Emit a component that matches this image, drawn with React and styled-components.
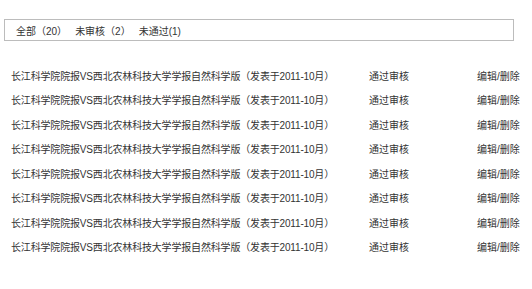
import React from 'react'
import styled, { createGlobalStyle } from 'styled-components'

const GlobalStyle = createGlobalStyle`
  body {
    margin: 0;
    background: #fff;
    font-family: "Liberation Sans", "Noto Sans CJK SC", sans-serif;
    font-size: 10px;
    color: #333;
  }
`

const Container = styled.div`
  padding: 19px 0 0 4px;
  width: 510px;
`

const Tabs = styled.div`
  display: flex;
  align-items: center;
  gap: 8px;
  height: 20px;
  padding-left: 11px;
  border: 1px solid #bcbcbc;
  background: #fff;
`

const Tab = styled.span`
  color: #333;
  cursor: pointer;
`

const List = styled.div`
  margin-top: 24px;
`

const Row = styled.div`
  display: grid;
  grid-template-columns: 358px 108px auto;
  height: 24.45px;
  line-height: 24.45px;
  padding-left: 7px;
  white-space: nowrap;
`

const Cell = styled.span`
  color: #333;
  letter-spacing: ${props => (props.tight ? '-0.17px' : '0')};
`

const tabs = ['全部（20）', '未审核（2）', '未通过(1)']
const rows = Array.from({ length: 8 }, () => ({
  title: '长江科学院院报VS西北农林科技大学学报自然科学版（发表于2011-10月）',
  status: '通过审核'
}))

const App = () => (
  <Container>
    <GlobalStyle />
    <Tabs>
      {tabs.map(t => (
        <Tab key={t}>{t}</Tab>
      ))}
    </Tabs>
    <List>
      {rows.map((r, i) => (
        <Row key={i}>
          <Cell tight>{r.title}</Cell>
          <Cell>{r.status}</Cell>
          <Cell>编辑/删除</Cell>
        </Row>
      ))}
    </List>
  </Container>
)

export default App
